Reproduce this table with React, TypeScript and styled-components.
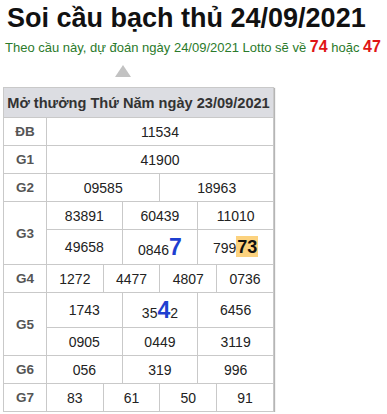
import * as React from 'react';
import styled, { createGlobalStyle } from 'styled-components';

const font = '"Liberation Sans", Arial, sans-serif';
const line = '#c9c9c9';

const GlobalStyle = createGlobalStyle`
  body {
    margin: 0;
    background: #fff;
    font-family: ${font};
  }
`;

const Page = styled.div`
  padding: 3px 0 0 3px;
`;

const Title = styled.h1`
  margin: 0 0 0 4px;
  font-size: 27px;
  font-weight: bold;
  color: #111;
`;

const Lead = styled.p`
  margin: 4px 0 0 2px;
  font-size: 13px;
  color: #2b7a2b;
`;

const Hit = styled.b`
  font-size: 16px;
  color: #e01515;
`;

const Pointer = styled.div`
  margin: 9px 0 0 112px;
  width: 0;
  height: 0;
  border-left: 8px solid transparent;
  border-right: 8px solid transparent;
  border-bottom: 12px solid #c2c2c2;
`;

const Board = styled.table`
  margin-top: 10px;
  width: 271px;
  table-layout: fixed;
  border-collapse: collapse;
  border: 1px solid ${line};
  box-shadow: 1px 1px 1px #b5b5b5;
  font-size: 14px;
  color: #222;
`;

const Head = styled.th`
  height: 29px;
  padding: 0;
  background: #dcdde2;
  color: #333;
  font-size: 14.6px;
  font-weight: bold;
  border: 1px solid ${line};
`;

const Label = styled.td`
  padding: 0;
  height: 27px;
  text-align: center;
  font-size: 13.5px;
  font-weight: bold;
  color: #555;
  border: 1px solid ${line};
`;

const Num = styled.td<{ $tall?: boolean }>`
  padding: 0;
  height: ${({ $tall }) => ($tall ? '34px' : '27px')};
  text-align: center;
  border: 1px solid ${line};
`;

const Big = styled.b`
  font-size: 23px;
  color: #1e3fd0;
  line-height: 1;
`;

const Mark = styled.b`
  font-size: 18px;
  color: #111;
  background: #fcd27e;
  padding: 1px 1px 0;
`;

type Cell = React.ReactNode;

const Row: React.FC<{ label?: string; span?: number; cells: Cell[]; tall?: boolean }> = ({ label, span, cells, tall }) => {
  const each = 12 / cells.length;
  return (
    <tr>
      {label && <Label rowSpan={span}>{label}</Label>}
      {cells.map((c, i) => (
        <Num key={i} colSpan={each} $tall={tall}>{c}</Num>
      ))}
    </tr>
  );
};

export default function App() {
  return (
    <Page>
      <GlobalStyle />
      <Title>Soi cầu bạch thủ 24/09/2021</Title>
      <Lead>
        Theo cầu này, dự đoán ngày 24/09/2021 Lotto sẽ về <Hit>74</Hit> hoặc <Hit>47</Hit>
      </Lead>
      <Pointer />
      <Board>
        <colgroup>
          <col style={{ width: 43 }} />
          {Array.from({ length: 12 }).map((_, i) => <col key={i} />)}
        </colgroup>
        <thead>
          <tr>
            <Head colSpan={13}>Mở thưởng Thứ Năm ngày 23/09/2021</Head>
          </tr>
        </thead>
        <tbody>
          <Row label="ĐB" cells={['11534']} />
          <Row label="G1" cells={['41900']} />
          <Row label="G2" cells={['09585', '18963']} />
          <Row label="G3" span={2} cells={['83891', '60439', '11010']} />
          <Row
            tall
            cells={[
              '49658',
              <>0846<Big>7</Big></>,
              <>799<Mark>73</Mark></>,
            ]}
          />
          <Row label="G4" cells={['1272', '4477', '4807', '0736']} />
          <Row
            label="G5"
            span={2}
            tall
            cells={['1743', <>35<Big>4</Big>2</>, '6456']}
          />
          <Row cells={['0905', '0449', '3119']} />
          <Row label="G6" cells={['056', '319', '996']} />
          <Row label="G7" cells={['83', '61', '50', '91']} />
        </tbody>
      </Board>
    </Page>
  );
}
